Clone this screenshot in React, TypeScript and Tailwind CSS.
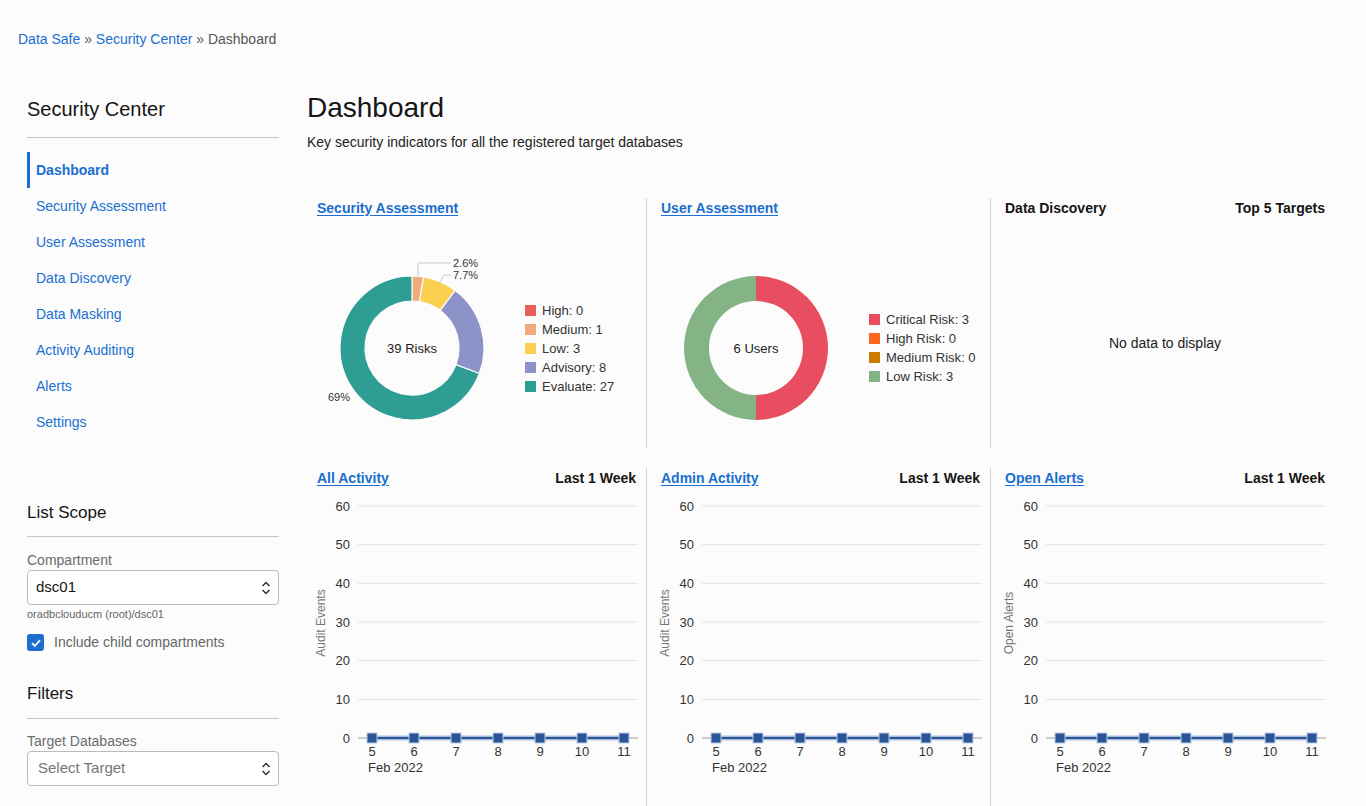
import React from "react";

const font = "font-['Liberation_Sans',Arial,sans-serif]";

const navItems = [
  "Dashboard",
  "Security Assessment",
  "User Assessment",
  "Data Discovery",
  "Data Masking",
  "Activity Auditing",
  "Alerts",
  "Settings",
];

type Slice = { label: string; value: number; color: string };

const riskSlices: Slice[] = [
  { label: "High", value: 0, color: "#e8605a" },
  { label: "Medium", value: 1, color: "#f3aa7a" },
  { label: "Low", value: 3, color: "#fbd04f" },
  { label: "Advisory", value: 8, color: "#8d93c8" },
  { label: "Evaluate", value: 27, color: "#2e9e94" },
];

const userSlices: Slice[] = [
  { label: "Critical Risk", value: 3, color: "#e84d60" },
  { label: "High Risk", value: 0, color: "#fb661c" },
  { label: "Medium Risk", value: 0, color: "#cc7a00" },
  { label: "Low Risk", value: 3, color: "#84b386" },
];

const pt = (cx: number, cy: number, rad: number, deg: number) => {
  const a = (deg * Math.PI) / 180;
  return [cx + rad * Math.sin(a), cy - rad * Math.cos(a)];
};

const arcPath = (cx: number, cy: number, R: number, r: number, a0: number, a1: number) => {
  const large = a1 - a0 > 180 ? 1 : 0;
  const [x0, y0] = pt(cx, cy, R, a0);
  const [x1, y1] = pt(cx, cy, R, a1);
  const [x2, y2] = pt(cx, cy, r, a1);
  const [x3, y3] = pt(cx, cy, r, a0);
  return `M${x0} ${y0} A${R} ${R} 0 ${large} 1 ${x1} ${y1} L${x2} ${y2} A${r} ${r} 0 ${large} 0 ${x3} ${y3} Z`;
};

const Donut = ({
  slices,
  center,
  gaps,
  children,
}: {
  slices: Slice[];
  center: string;
  gaps?: boolean;
  children?: React.ReactNode;
}) => {
  const total = slices.reduce((s, x) => s + x.value, 0);
  let acc = 0;
  return (
    <svg width="200" height="200" className="shrink-0">
      {slices.map((s) => {
        if (!s.value) return null;
        const a0 = (acc / total) * 360;
        acc += s.value;
        const a1 = (acc / total) * 360;
        return (
          <path
            key={s.label}
            d={arcPath(95, 100, 72, 47, a0, a1)}
            fill={s.color}
            stroke={gaps ? "#fcfcfc" : "none"}
            strokeWidth={gaps ? 1.2 : 0}
          />
        );
      })}
      <text x="95" y="104.5" textAnchor="middle" fontSize="13" fill="#222">
        {center}
      </text>
      {children}
    </svg>
  );
};

const Legend = ({ slices }: { slices: Slice[] }) => (
  <div className="flex flex-col text-[13px] leading-[19px] text-[#333]">
    {slices.map((s) => (
      <div key={s.label} className="flex items-center gap-[6px]">
        <span className="inline-block w-[11px] h-[11px]" style={{ background: s.color }} />
        <span>
          {s.label}: {s.value}
        </span>
      </div>
    ))}
  </div>
);

const ChevronUpDown = () => (
  <svg width="10" height="16" viewBox="0 0 10 16" fill="none" stroke="#333" strokeWidth="1.5">
    <path d="M1.5 6 L5 2.5 L8.5 6" />
    <path d="M1.5 10 L5 13.5 L8.5 10" />
  </svg>
);

const LineChart = ({ axisTitle }: { axisTitle: string }) => {
  const ticks = [60, 50, 40, 30, 20, 10, 0];
  const yOf = (v: number) => 248 - (v / 60) * 232;
  const xs = [5, 6, 7, 8, 9, 10, 11].map((d, i) => ({ d, x: 70 + i * 42 }));
  return (
    <svg width="344" height="316" className="block">
      {ticks.map((t) => (
        <g key={t}>
          {t !== 0 && <line x1="56" x2="336" y1={yOf(t)} y2={yOf(t)} stroke="#e4e4e4" strokeWidth="1" />}
          <text x="48" y={yOf(t) + 4.5} textAnchor="end" fontSize="13" fill="#333">
            {t}
          </text>
        </g>
      ))}
      <line x1="56" x2="336" y1="248" y2="248" stroke="#9a9a9a" strokeWidth="1" />
      <text
        x="20"
        y="133"
        textAnchor="middle"
        fontSize="12"
        fill="#777"
        transform="rotate(-90 20 133)"
        dominantBaseline="middle"
      >
        {axisTitle}
      </text>
      <line x1="70" x2="322" y1="248" y2="248" stroke="#a7bbdb" strokeWidth="5" />
      <line x1="70" x2="322" y1="248" y2="248" stroke="#2a5599" strokeWidth="2" />
      {xs.map(({ d, x }) => (
        <g key={d}>
          <rect x={x - 5} y="243" width="10" height="10" fill="#2a5599" stroke="#b9cbe6" strokeWidth="1" />
          <text x={x} y="266" textAnchor="middle" fontSize="13" fill="#333">
            {d}
          </text>
        </g>
      ))}
      <text x="66" y="282" fontSize="13" fill="#333">
        Feb 2022
      </text>
    </svg>
  );
};

const ChartHeader = ({ title, right, link = true }: { title: string; right?: string; link?: boolean }) => (
  <div className="flex items-center justify-between h-[20px] text-[14px] font-bold">
    <span className={link ? "text-[#1a6fd0] underline underline-offset-2" : "text-[#161513]"}>{title}</span>
    {right && <span className="text-[#161513]">{right}</span>}
  </div>
);

const App = () => {
  return (
    <div className={`${font} bg-[#fcfcfc] w-[1366px] h-[806px] overflow-hidden text-[#161513]`}>
      <div className="pl-[18px] pt-[30px] h-[48px] text-[14px] leading-[18px]">
        <span className="text-[#1a6fd0]">Data Safe</span>
        <span className="text-[#555]"> » </span>
        <span className="text-[#1a6fd0]">Security Center</span>
        <span className="text-[#555]"> » Dashboard</span>
      </div>

      <div className="flex mt-[43px]">
        {/* sidebar */}
        <div className="w-[252px] ml-[27px] pt-[6px] shrink-0">
          <div className="text-[20px] leading-[24px] pb-[16px] border-b border-[#c2c6cc]">Security Center</div>
          <div className="mt-[14px] flex flex-col text-[14px]">
            {navItems.map((item) =>
              item === "Dashboard" ? (
                <div
                  key={item}
                  className="h-[36px] flex items-center border-l-[3px] border-[#1a6fd0] pl-[6px] font-bold text-[#1a6fd0]"
                >
                  {item}
                </div>
              ) : (
                <div key={item} className="h-[36px] flex items-center pl-[9px] text-[#1a6fd0]">
                  {item}
                </div>
              )
            )}
          </div>

          <div className="mt-[63px] text-[17px] leading-[20px] pb-[13px] border-b border-[#c2c6cc]">List Scope</div>
          <div className="mt-[14px] text-[14px] leading-[18px] text-[#6b6b6b]">Compartment</div>
          <div className="mt-[1px] h-[35px] border border-[#b7bcc3] rounded-[4px] bg-white flex items-center justify-between pl-[8px] pr-[7px] text-[15px] text-[#161513]">
            <span>dsc01</span>
            <ChevronUpDown />
          </div>
          <div className="mt-[2px] text-[11px] leading-[14px] text-[#666]">oradbclouducm (root)/dsc01</div>
          <div className="mt-[11px] flex items-center gap-[10px]">
            <span className="w-[17px] h-[17px] rounded-[3px] bg-[#1a6fd0] flex items-center justify-center">
              <svg width="12" height="12" viewBox="0 0 12 12" fill="none" stroke="white" strokeWidth="1.8">
                <path d="M2 6.2 L4.8 9 L10 3.2" />
              </svg>
            </span>
            <span className="text-[14px] text-[#666]">Include child compartments</span>
          </div>

          <div className="mt-[31px] text-[17px] leading-[20px] pb-[14px] border-b border-[#c2c6cc]">Filters</div>
          <div className="mt-[13px] text-[14px] leading-[18px] text-[#6b6b6b]">Target Databases</div>
          <div className="mt-[1px] h-[35px] border border-[#b7bcc3] rounded-[4px] bg-white flex items-center justify-between pl-[10px] pr-[7px] text-[15px] text-[#777]">
            <span>Select Target</span>
            <ChevronUpDown />
          </div>
        </div>

        {/* main */}
        <div className="ml-[23px]">
          <h1 className="ml-[5px] text-[28px] leading-[34px]">Dashboard</h1>
          <p className="ml-[5px] mt-[8px] text-[14px] leading-[18px] text-[#222]">
            Key security indicators for all the registered target databases
          </p>

          <div className="mt-[47px] grid grid-cols-[344px_344px_344px]">
            <div className="h-[250px] pl-[15px] pr-[10px]">
              <ChartHeader title="Security Assessment" />
              <div className="mt-[30px] flex items-center gap-[8px]">
                <Donut slices={riskSlices} center="39 Risks" gaps>
                  <polyline points="101,28 101,15 134,15" fill="none" stroke="#c4ccd8" strokeWidth="1" />
                  <polyline points="123,34 127,27 134,27" fill="none" stroke="#c4ccd8" strokeWidth="1" />
                  <text x="136" y="19" fontSize="11" fill="#333">2.6%</text>
                  <text x="136" y="31" fontSize="11" fill="#333">7.7%</text>
                  <text x="22" y="153" fontSize="11" fill="#333" textAnchor="middle">69%</text>
                </Donut>
                <Legend slices={riskSlices} />
              </div>
            </div>
            <div className="h-[250px] border-l border-[#d2d2d2] pl-[14px] pr-[10px]">
              <ChartHeader title="User Assessment" />
              <div className="mt-[30px] flex items-center gap-[8px]">
                <Donut slices={userSlices} center="6 Users" />
                <Legend slices={userSlices} />
              </div>
            </div>
            <div className="h-[250px] border-l border-[#d2d2d2] pl-[14px] pr-[9px] flex flex-col">
              <ChartHeader title="Data Discovery" right="Top 5 Targets" link={false} />
              <div className="flex-1 flex items-center justify-center text-[14px] text-[#222] pt-[20px]">
                No data to display
              </div>
            </div>

            <div className="mt-[20px] h-[340px] pl-[15px] pr-[10px]">
              <ChartHeader title="All Activity" right="Last 1 Week" />
              <div className="-ml-[15px] mt-[2px]">
                <LineChart axisTitle="Audit Events" />
              </div>
            </div>
            <div className="mt-[20px] h-[340px] border-l border-[#d2d2d2] pl-[14px] pr-[10px]">
              <ChartHeader title="Admin Activity" right="Last 1 Week" />
              <div className="-ml-[15px] mt-[2px]">
                <LineChart axisTitle="Audit Events" />
              </div>
            </div>
            <div className="mt-[20px] h-[340px] border-l border-[#d2d2d2] pl-[14px] pr-[9px]">
              <ChartHeader title="Open Alerts" right="Last 1 Week" />
              <div className="-ml-[15px] mt-[2px]">
                <LineChart axisTitle="Open Alerts" />
              </div>
            </div>
          </div>
        </div>
      </div>
    </div>
  );
};

export default App;
